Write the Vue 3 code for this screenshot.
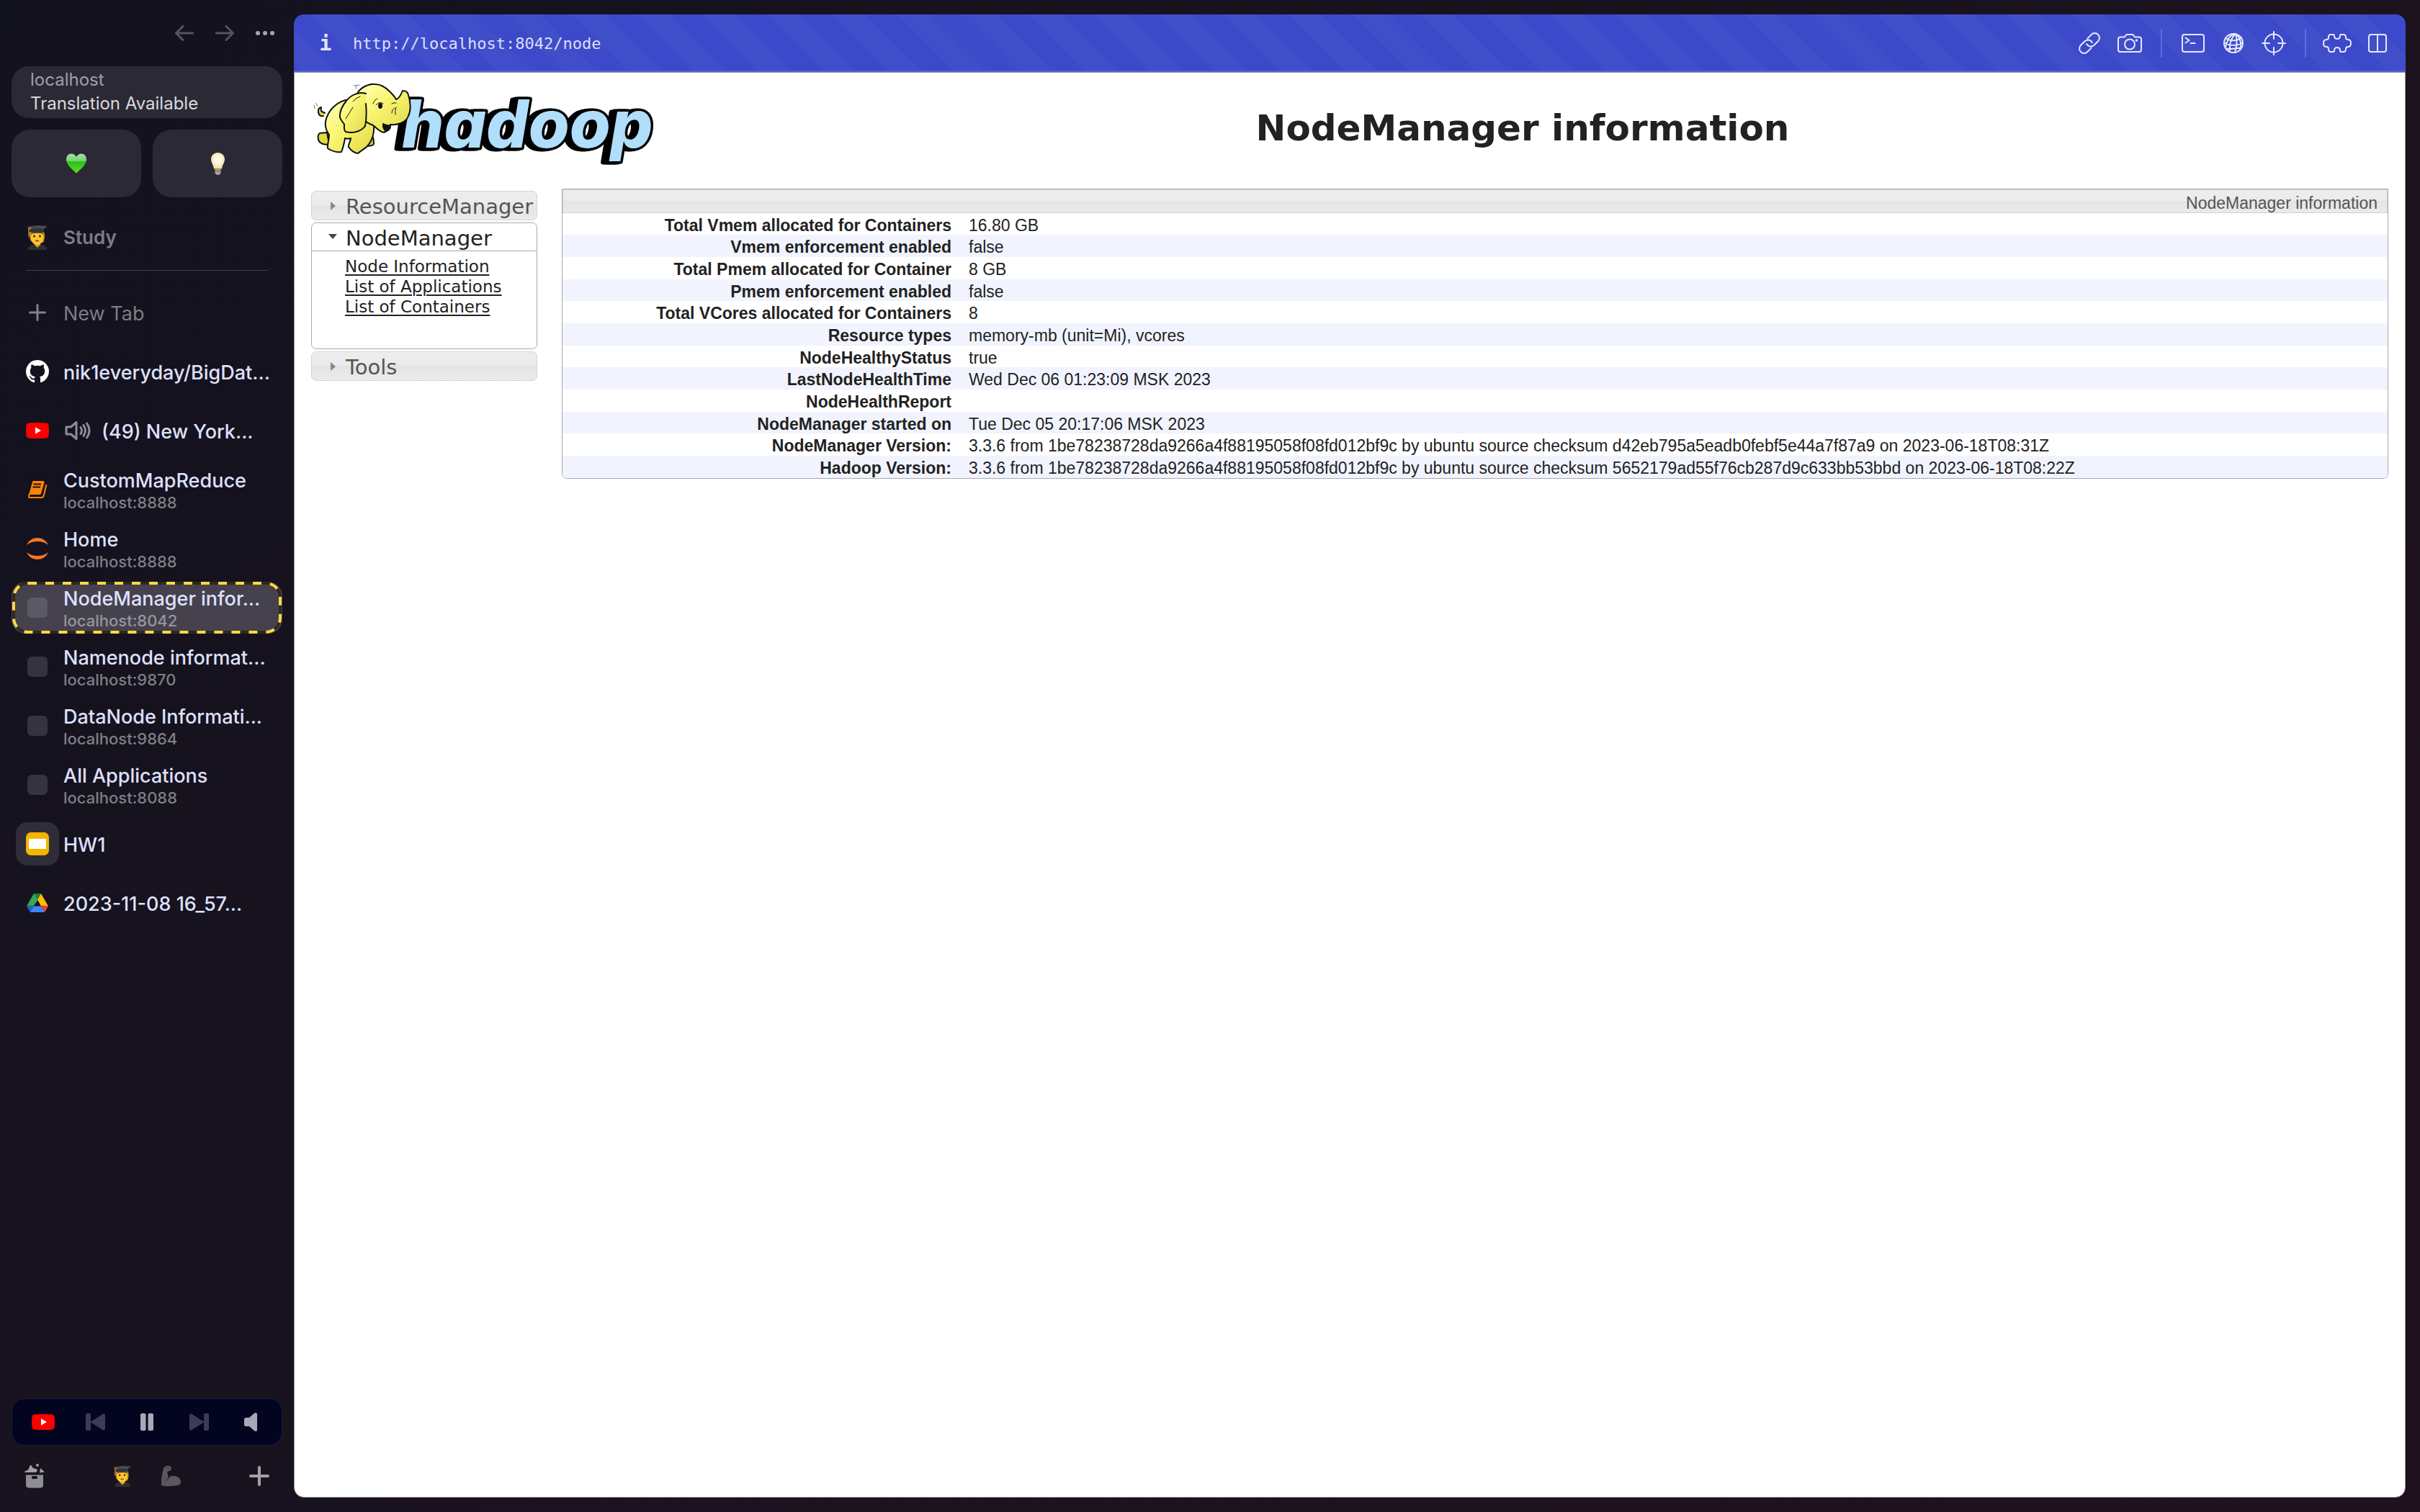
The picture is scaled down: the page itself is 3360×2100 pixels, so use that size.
<script setup>
const tabs = [
  { icon: 'github', title: 'nik1everyday/BigDat...' },
  { icon: 'youtube', title: '(49) New York...', sound: true },
  { icon: 'book', title: 'CustomMapReduce', host: 'localhost:8888' },
  { icon: 'jupyter', title: 'Home', host: 'localhost:8888' },
  { icon: 'blank', title: 'NodeManager infor...', host: 'localhost:8042', active: true },
  { icon: 'blank', title: 'Namenode informat...', host: 'localhost:9870' },
  { icon: 'blank', title: 'DataNode Informati...', host: 'localhost:9864' },
  { icon: 'blank', title: 'All Applications', host: 'localhost:8088' },
  { icon: 'slides', title: 'HW1', tile: true },
  { icon: 'drive', title: '2023-11-08 16_57...' },
]

const links = ['Node Information', 'List of Applications', 'List of Containers']

const rows = [
  ['Total Vmem allocated for Containers', '16.80 GB'],
  ['Vmem enforcement enabled', 'false'],
  ['Total Pmem allocated for Container', '8 GB'],
  ['Pmem enforcement enabled', 'false'],
  ['Total VCores allocated for Containers', '8'],
  ['Resource types', 'memory-mb (unit=Mi), vcores'],
  ['NodeHealthyStatus', 'true'],
  ['LastNodeHealthTime', 'Wed Dec 06 01:23:09 MSK 2023'],
  ['NodeHealthReport', ''],
  ['NodeManager started on', 'Tue Dec 05 20:17:06 MSK 2023'],
  ['NodeManager Version:', '3.3.6 from 1be78238728da9266a4f88195058f08fd012bf9c by ubuntu source checksum d42eb795a5eadb0febf5e44a7f87a9 on 2023-06-18T08:31Z'],
  ['Hadoop Version:', '3.3.6 from 1be78238728da9266a4f88195058f08fd012bf9c by ubuntu source checksum 5652179ad55f76cb287d9c633bb53bbd on 2023-06-18T08:22Z'],
]
</script>

<template>
  <div class="browser">
    <svg class="defs" aria-hidden="true">
      <defs>
        <linearGradient id="heartFill" x1="0" y1="0" x2="0" y2="1">
          <stop offset="0" stop-color="#a5e0a0" />
          <stop offset=".36" stop-color="#7ccf78" />
          <stop offset=".42" stop-color="#25c11c" />
          <stop offset="1" stop-color="#62e01c" />
        </linearGradient>
        <radialGradient id="bulbFill" cx=".5" cy=".45" r=".6">
          <stop offset=".3" stop-color="#fffdf4" />
          <stop offset="1" stop-color="#f3d587" />
        </radialGradient>
        <linearGradient id="elephantFill" x1="0" y1="0" x2="1" y2="1">
          <stop offset="0" stop-color="#ffffc0" />
          <stop offset=".4" stop-color="#fbf778" />
          <stop offset="1" stop-color="#dfd943" />
        </linearGradient>
        <symbol id="student" viewBox="0 0 28 34">
          <path d="M1 34c0-5 4-8 13-8s13 3 13 8z" fill="#2d2e33" />
          <path d="M10 24h8v3l-4 4-4-4z" fill="#dfa022" />
          <path d="M3 9h20c2 5 1 11-1 15h-3L6 23C3 20 2 14 3 9z" fill="#c98a1c" />
          <path d="M5 9h17v8c0 6-4 10-8.500 10S5 23 5 17z" fill="#fcc42f" />
          <path d="M5 8c5 3 14 3 18 0l-1 5c-5-3-12-3-17 0z" fill="#9c6817" />
          <path d="M4 4h19v5c-5 2-14 2-19 0z" fill="#34353b" />
          <path d="M0 2l14-2 14 1-5 4c-6-1-13-1-19 0z" fill="#4a4b51" />
          <path d="M1 2l5 1-3 4v8l-2 1z" fill="#9b6a33" />
          <circle cx="9.500" cy="15" r="1.500" fill="#3b2508" />
          <circle cx="17.500" cy="15" r="1.500" fill="#3b2508" />
          <path d="M11 22q2.500-1.500 5 0" fill="none" stroke="#7d3d10" stroke-width="1.500" />
        </symbol>
        <symbol id="yt" viewBox="0 0 32 22">
          <path d="M4 .6Q16-.6 28 .6q3 .4 3.500 3.400.9 7 0 14-.5 3-3.500 3.400-12 1.200-24 0-3-.4-3.500-3.400-.9-7 0-14Q1 1 4 .6z" fill="#f00" />
          <path d="M13 6.300v9.400l8-4.700z" fill="#fff" />
        </symbol>
      </defs>
    </svg>

    <aside class="sidebar">
      <nav class="history" aria-label="History">
        <button class="dim" aria-label="Back">
          <svg width="26" height="22" viewBox="0 0 26 22"><path d="M25 11H1.500M11 1.500L1.500 11l9.500 9.500" /></svg>
        </button>
        <button class="dim" aria-label="Forward">
          <svg width="26" height="22" viewBox="0 0 26 22"><path d="M1 11h23.500M15 1.500l9.500 9.500-9.500 9.500" /></svg>
        </button>
        <button aria-label="More">
          <svg width="26" height="6" viewBox="0 0 26 6" class="solid"><circle cx="3" cy="3" r="3" /><circle cx="13" cy="3" r="3" /><circle cx="23" cy="3" r="3" /></svg>
        </button>
      </nav>

      <button class="site">
        <span class="site-host">localhost</span>
        <span class="site-note">Translation Available</span>
      </button>

      <div class="favorites">
        <button aria-label="Green heart">
          <svg width="28" height="28" viewBox="0 0 28 28"><path d="M14 27.500C8 22 0 16 0 8.500 0 3.500 3 .5 7 .5c3.200 0 5.500 1.600 7 4.500C15.500 2.100 17.800.5 21 .5c4 0 7 3 7 8 0 7.500-8 13.500-14 19z" fill="url(#heartFill)" /></svg>
        </button>
        <button aria-label="Light bulb">
          <svg width="19" height="31" viewBox="0 0 19 31"><path d="M9.500 0C15 0 19 4 19 9.200c0 4.500-3 6.800-4 13.300H4C3 16 0 13.700 0 9.200 0 4 4 0 9.500 0z" fill="url(#bulbFill)" /><path d="M5.500 23h8v5.500L11 31H8l-2.500-2.500z" fill="#aaa39b" /><path d="M5.500 25.500h8" stroke="#77716b" stroke-width="1.200" /></svg>
        </button>
      </div>

      <h2 class="row space">
        <span class="icon"><svg width="28" height="34"><use href="#student" /></svg></span>
        Study
      </h2>
      <hr class="divider" />

      <div class="tabs">
        <button class="row new-tab">
          <span class="icon"><svg width="24" height="24" viewBox="0 0 24 24"><path d="M12 1.500v21M1.500 12h21" stroke="#828288" stroke-width="3" stroke-linecap="round" /></svg></span>
          <span class="label">New Tab</span>
        </button>
        <button v-for="tab in tabs" :key="tab.title" class="row tab" :class="{ active: tab.active }">
          <svg v-if="tab.active" class="focus-ring" aria-hidden="true">
            <rect class="ring-base" /><rect class="ring-dash" />
          </svg>
          <span class="icon" :class="{ tile: tab.tile }">
            <svg v-if="tab.icon === 'github'" width="32" height="32" viewBox="0 0 16 16"><path fill="#fff" d="M8 0C3.580 0 0 3.580 0 8c0 3.540 2.290 6.530 5.470 7.590.4.070.55-.17.55-.38 0-.19-.01-.82-.01-1.490-2.010.37-2.530-.49-2.690-.94-.09-.23-.48-.94-.82-1.130-.28-.15-.68-.52-.01-.53.63-.01 1.080.58 1.230.82.72 1.210 1.870.87 2.330.66.070-.52.28-.87.51-1.070-1.780-.2-3.640-.89-3.640-3.950 0-.87.31-1.590.82-2.150-.08-.2-.36-1.020.08-2.120 0 0 .67-.21 2.200.82.64-.18 1.320-.27 2-.27s1.360.09 2 .27c1.530-1.040 2.200-.82 2.200-.82.44 1.100.16 1.920.08 2.120.51.56.82 1.270.82 2.150 0 3.070-1.870 3.750-3.650 3.950.29.25.54.73.54 1.480 0 1.070-.01 1.930-.01 2.200 0 .21.15.46.55.38A8.010 8.010 0 0 0 16 8c0-4.420-3.580-8-8-8z" /></svg>
            <svg v-else-if="tab.icon === 'youtube'" width="32" height="22"><use href="#yt" /></svg>
            <svg v-else-if="tab.icon === 'book'" width="28" height="26" viewBox="0 0 28 26">
              <path d="M7.500 1H22q2 .5 1.500 2.500L19 18.500q-.5 1.500-2 1.500H2z" fill="#ff8400" />
              <path d="M8.500 5.500H19M7.500 9.500h10.500" stroke="#14131f" stroke-width="2" />
              <path d="M3.500 19Q1 21 2.500 24H20q2 0 2.500-2L26.500 6" fill="none" stroke="#ff8400" stroke-width="2" />
            </svg>
            <svg v-else-if="tab.icon === 'jupyter'" width="32" height="32" viewBox="0 0 32 32" fill="#f37726"><path d="M1 11C4 4 10 1 16 1s12 3 15 10C27 7.500 22 6 16 6S5 7.500 1 11z" /><path d="M1 21c3 7 9 10 15 10s12-3 15-10c-4 3.500-9 5-15 5S5 24.500 1 21z" /></svg>
            <svg v-else-if="tab.icon === 'slides'" width="32" height="32" viewBox="0 0 32 32"><rect width="32" height="32" rx="7" fill="#f5b400" /><path d="M4 9h24v14H4z" fill="#fff" /></svg>
            <svg v-else-if="tab.icon === 'drive'" width="30" height="26" viewBox="0 0 30 26">
              <path d="M10 0h5v10L9.500 17.500H0z" fill="#34a853" /><path d="M10 0h10l-5 8.500z" fill="#188038" /><path d="M20 0l10 17.500H20L15 8.500z" fill="#fbbc04" />
              <path d="M0 17.500h10L5 26z" fill="#1967d2" /><path d="M10 17.500h10L25 26H5z" fill="#4285f4" /><path d="M20 17.500h10L25 26z" fill="#ea4335" />
            </svg>
            <i v-else class="blank"></i>
          </span>
          <svg v-if="tab.sound" class="sound" width="36" height="26" viewBox="0 0 36 26"><path d="M2 8h6.500L16 1.500v23L8.500 18H2zM22 8.500q3 4.500 0 9M26 5.500q5 7.500 0 15M30.500 3q7 10 0 20" /></svg>
          <span class="label">
            <span class="tab-title">{{ tab.title }}</span>
            <small v-if="tab.host" class="tab-host">{{ tab.host }}</small>
          </span>
        </button>
      </div>

      <div class="player">
        <button aria-label="Open video"><svg width="32" height="22"><use href="#yt" /></svg></button>
        <button aria-label="Previous"><svg width="27" height="24" viewBox="0 0 27 24" fill="#3c3b55"><rect width="7" height="24" rx="2" /><path d="M7 11.500L24 .8q3-1 3 2v18.400q0 3-3 2L7 12.500z" /></svg></button>
        <button aria-label="Pause"><svg width="18" height="24" viewBox="0 0 18 24" fill="#a9a8b8"><rect width="7.500" height="24" rx="2" /><rect x="10.500" width="7.500" height="24" rx="2" /></svg></button>
        <button aria-label="Next"><svg width="27" height="24" viewBox="0 0 27 24" fill="#3c3b55"><rect x="20" width="7" height="24" rx="2" /><path d="M20 11.500L3 .8q-3-1-3 2v18.400q0 3 3 2l17-10.700z" /></svg></button>
        <button aria-label="Mute"><svg width="18" height="26" viewBox="0 0 18 26" fill="#a9a8b8"><path d="M2.500 7H7L14.500.6Q18-.8 18 2v22q0 2.800-3.500 1.400L7 19H2.500Q0 19 0 16.500v-7Q0 7 2.500 7z" /></svg></button>
      </div>

      <footer class="spaces">
        <button aria-label="Library">
          <svg width="28" height="34" viewBox="0 0 28 34"><path d="M2 15.500h24v13.500q0 4.500-4.500 4.500h-15Q2 33.500 2 29z" fill="#8f8d94" /><rect x="10" y="17" width="8" height="4" rx="1.500" fill="#19141f" /><g fill="#a09ea4"><path d="M0 11l5.500-3 2-5.500q1-1 2 0L12 6l5 1.500q1.500 1 .5 2.500L16 12H1q-1 0-1-1z" /><circle cx="18" cy="2" r="2" /><path d="M22 6l6 5.500-7 1z" /></g></svg>
        </button>
        <div class="space-list">
          <button aria-label="Study"><svg width="24" height="29"><use href="#student" /></svg></button>
          <button aria-label="Fitness">
            <svg width="28" height="30" viewBox="0 0 28 30"><path d="M1 28L1 24C1 17 2 11 4 5 5 2 8 0 12 1q3 1 3 3.500T12 8l-3 1c1 4 2 7 1 10 2-4 6-5 10-4 5 1 8 4 8 8 0 3-2 5-5 5-8 1-17 2-22 0z" fill="#5a575f" /><path d="M6 21q4 0 5-3M8 4q3-1 5 1" fill="none" stroke="#3f3c45" stroke-width="1.500" /></svg>
          </button>
        </div>
        <button aria-label="New"><svg width="28" height="28" viewBox="0 0 28 28"><path d="M14 2v24M2 14h24" stroke="#a3a1a6" stroke-width="4" stroke-linecap="round" /></svg></button>
      </footer>
    </aside>

    <main class="window">
      <header class="toolbar">
        <button class="info" aria-label="Site information">i</button>
        <a class="address" href="http://localhost:8042/node">http://localhost:8042/node</a>
        <div class="tools">
          <button aria-label="Copy link"><svg width="30" height="30" viewBox="0 0 30 30"><g transform="rotate(-45 15 15)"><path d="M12.500 21.500H4.500a6.500 6.500 0 0 1 0-13h8a6.500 6.500 0 0 1 6 8.500" /><path d="M17.500 8.500h8a6.500 6.500 0 0 1 0 13h-8a6.500 6.500 0 0 1-6-8.500" /></g></svg></button>
          <button aria-label="Capture"><svg width="34" height="26" viewBox="0 0 34 26"><path d="M4 4.500h6L12.500 1h9L24 4.500h6q3 0 3 3V22q0 3-3 3H4q-3 0-3-3V7.500q0-3 3-3z" /><circle cx="17" cy="14.500" r="7" /><circle cx="26.500" cy="9" r=".8" /></svg></button>
          <span class="separator"></span>
          <button aria-label="Console"><svg width="32" height="26" viewBox="0 0 32 26"><rect x="1" y="1" width="30" height="24" rx="3" /><path d="M5.500 5.500l5 3.500-5 3.500M12.500 13h6" /></svg></button>
          <button aria-label="Network"><svg width="28" height="28" viewBox="0 0 28 28"><circle cx="14" cy="14" r="13" /><path d="M17 1C11 6 8 15 9 26M17 1c2 7 2 17-1 26M17 1c6 4 8 12 7 21M17 1C10 2 5 7 3 21M3 7c7 5 17 4 22-1M1 13c8 5 19 5 26 0M4 22c6 0 14 0 21-2" /></svg></button>
          <button aria-label="Inspect"><svg width="34" height="34" viewBox="0 0 34 34"><circle cx="17" cy="17" r="12.500" /><path d="M17 1v10M17 23v10M1 17h10M23 17h10" /></svg></button>
          <span class="separator"></span>
          <button aria-label="Extensions"><svg width="40" height="28" viewBox="0 0 40 28"><path d="M11 2h4q1 0 1 2 0 4 4 4t4-4q0-2 1-2h4q3 0 3 4 0 3 3 3 4 0 4 5t-4 5q-3 0-3 3 0 4-3 4h-4q-1 0-1-2 0-4-4-4t-4 4q0 2-1 2h-4q-3 0-3-4 0-3-3-3-4 0-4-5t4-5q3 0 3-3 0-4 3-4z" /></svg></button>
          <button aria-label="Split view"><svg width="26" height="26" viewBox="0 0 26 26"><rect x="1" y="1" width="24" height="24" rx="3" /><path d="M13 1v24" /></svg></button>
        </div>
      </header>

      <div class="page">
        <div class="page-header">
          <svg class="logo" width="480" height="130" viewBox="0 0 480 130" role="img" aria-label="hadoop">
            <text class="wordmark" x="126" y="92">hadoop</text>
            <path d="M5 38l-1-5M9 34l-3-4M62 10l1-4M59 6l8-1" fill="none" stroke="#777" stroke-linecap="round" />
            <g stroke="#111" stroke-width="2" stroke-linejoin="round" stroke-linecap="round">
              <path d="M17 48q-6 1-7-5-1-6 4-7-1 5 1 6t4 2" fill="#dfd943" />
              <path d="M12 72c-4 3-3 11 2 14 4 2 8 2 11 1l-3-16z" fill="#dfd943" />
              <path d="M82 73c4 2 5 6 5 13 0 4-10 5-13 2z" fill="#d5cf3c" />
              <path d="M53 25C36 27 23 40 20 56c-1 8 1 13 5 18 0 8-3 14-2 19 5 4 14 6 19 5 2-5 4-13 5-19 3 1 5 1 8 0 0 4-4 9-3 12 3 5 9 9 13 9 4-4 9-6 12-9 8-8 11-20 10-30z" fill="url(#elephantFill)" />
              <path d="M65 15C70 8 80 3 89 4c9 0 15 5 20 10 4 4 7 7 9 11 4-1 7-7 9-12 4 0 7 1 8 6 3 9 4 21 0 29-3 9-15 13-25 12 0 6-4 9-9 11-6-1-10-6-15-10-14-5-23-15-25-27z" fill="url(#elephantFill)" />
              <path d="M100 59q-1 7 4 10 6-1 6-8-5 1-10-2z" fill="#111" />
              <path d="M76 17C66 14 55 19 49 27c-5 6-10 14-9 23 1 4 4 6 6 10 0 4-1 8 2 10 11 3 22-1 27-8 2-9 2-19 1-31" fill="url(#elephantFill)" />
              <path d="M58 28q5-6 10-7M48 52l10-16M86 31q2-6 6-7" fill="none" stroke-width="1" />
              <path d="M112 31q3-2 6-1M112 44q0-5 4-7M117 46q-1-6 1-10M90 33q5-6 10-2" fill="none" stroke-width="1" />
              <ellipse cx="96" cy="34" rx="2" ry="3" fill="#111" />
            </g>
          </svg>
          <h1>NodeManager information</h1>
        </div>

        <div class="columns">
          <nav class="menu" aria-label="Cluster">
            <button class="menu-head"><svg width="14" height="12" viewBox="0 0 14 12"><path d="M4 0l7 6-7 6z" fill="#888" /></svg><span>ResourceManager</span></button>
            <section class="menu-group">
              <button class="menu-head open"><svg width="14" height="12" viewBox="0 0 14 12"><path d="M1 2h12L7 9z" fill="#454545" /></svg><span>NodeManager</span></button>
              <ul>
                <li v-for="link in links" :key="link"><a href="#">{{ link }}</a></li>
              </ul>
            </section>
            <button class="menu-head"><svg width="14" height="12" viewBox="0 0 14 12"><path d="M4 0l7 6-7 6z" fill="#888" /></svg><span>Tools</span></button>
          </nav>

          <div class="info-box">
            <table>
              <colgroup>
                <col class="name-col" />
                <col />
              </colgroup>
              <thead>
                <tr><th colspan="2">NodeManager information</th></tr>
              </thead>
              <tbody>
                <tr v-for="row in rows" :key="row[0]">
                  <th scope="row">{{ row[0] }}</th>
                  <td>{{ row[1] }}</td>
                </tr>
              </tbody>
            </table>
          </div>
        </div>
      </div>
    </main>
  </div>
</template>

<style>
html,
body {
  margin: 0;
  background: #15131f;
}
</style>

<style scoped>
.browser {
  display: flex;
  min-height: 100vh;
  box-sizing: border-box;
  background: linear-gradient(135deg, #12121e, #1a131f 50%, #20111e);
  font-family: Inter, sans-serif;
}

.browser * {
  box-sizing: border-box;
}

.defs {
  position: absolute;
  width: 0;
  height: 0;
}

button {
  display: flex;
  align-items: center;
  justify-content: center;
  margin: 0;
  padding: 0;
  border: 0;
  background: none;
  color: inherit;
  font: inherit;
}

svg {
  display: block;
  flex: none;
}

.sidebar {
  display: flex;
  flex-direction: column;
  flex: none;
  width: 408px;
  padding: 0 16px;
}

.history {
  display: flex;
  justify-content: flex-end;
  gap: 16px;
  padding-right: 4px;
}

.history button {
  width: 40px;
  height: 92px;
}

.history svg {
  fill: none;
  stroke: #a5a5aa;
  stroke-width: 3;
  stroke-linecap: round;
  stroke-linejoin: round;
}

.history .dim svg {
  stroke: #55545d;
}

.history .solid {
  fill: #a5a5aa;
  stroke: none;
}

.site {
  flex-direction: column;
  align-items: flex-start;
  height: 72px;
  padding: 0 0 2px 26px;
  border-radius: 24px;
  background: #2b2935;
  font-size: 24px;
  line-height: 33px;
}

.site-host {
  color: #a09fa5;
}

.site-note {
  color: #dadadc;
}

.favorites {
  display: flex;
  gap: 16px;
  margin-top: 16px;
}

.favorites button {
  flex: 1;
  height: 94px;
  border-radius: 26px;
  background: #2b2935;
}

.row {
  display: flex;
  align-items: center;
  justify-content: flex-start;
  gap: 20px;
  width: 100%;
  height: 72px;
  padding-left: 20px;
  font-size: 27px;
  line-height: 32px;
  text-align: left;
  white-space: nowrap;
}

.icon {
  display: flex;
  align-items: center;
  justify-content: center;
  width: 32px;
  height: 32px;
}

.icon.tile {
  width: 60px;
  height: 60px;
  margin: 0 -14px;
  border-radius: 16px;
  background: #2f2d39;
}

.space {
  margin: 20px 0 0;
  color: #7d7d84;
  font-size: 26px;
  font-weight: 600;
}

.divider {
  width: 336px;
  height: 1px;
  margin: 9px 20px 22px;
  border: 0;
  background: #3f3d48;
}

.tabs {
  display: flex;
  flex-direction: column;
  gap: 10px;
}

.new-tab {
  color: #7d7d84;
}

.tab {
  position: relative;
  border-radius: 20px;
  color: #dfe0fc;
}

.tab.active {
  background: #45424e;
}

.focus-ring {
  position: absolute;
  inset: 0;
  width: 100%;
  height: 100%;
  overflow: visible;
}

.focus-ring rect {
  x: 3px;
  y: 2px;
  width: calc(100% - 6px);
  height: calc(100% - 4px);
  rx: 20px;
  fill: none;
  stroke-width: 4;
}

.ring-base {
  stroke: #30291a;
}

.ring-dash {
  stroke: #ffd945;
  stroke-dasharray: 12 12;
}

.sound {
  margin-left: 2px;
  margin-right: -5px;
  fill: none;
  stroke: #8d8c93;
  stroke-width: 3;
  stroke-linejoin: round;
  stroke-linecap: round;
}

.label {
  display: flex;
  flex-direction: column;
  padding-top: 3px;
}

.tab-title {
  font-weight: 500;
}

.tab-host {
  color: #7f7f86;
  font-size: 22px;
  font-weight: 500;
  line-height: 28px;
}

.active .tab-host {
  color: #97959d;
}

.blank {
  width: 28px;
  height: 28px;
  border-radius: 6px;
  background: #35333f;
}

.active .blank {
  background: #5b5963;
}

.player {
  display: flex;
  align-items: center;
  justify-content: space-between;
  height: 66px;
  margin-top: auto;
  padding: 0 8px;
  border: 1px solid #1b1b3c;
  border-radius: 18px;
  background: #030420;
}

.player button {
  width: 70px;
  height: 64px;
}

.spaces {
  display: flex;
  align-items: center;
  justify-content: space-between;
  height: 92px;
  padding: 0 18px 8px;
}

.space-list {
  display: flex;
  align-items: center;
  gap: 41px;
}

.window {
  display: flex;
  flex-direction: column;
  flex: 1;
  min-width: 0;
  margin: 20px 20px 20px 0;
  border-radius: 14px;
  overflow: hidden;
}

.toolbar {
  display: flex;
  align-items: center;
  height: 80px;
  padding: 2px 11px 0 28px;
  border-bottom: 2px solid #5560cd;
  background: repeating-linear-gradient(45deg, #3c49ca 0, #3c49ca 8px, #404eca 8px, #404eca 40px, #3c49ca 40px, #3c49ca 64px);
  color: #e4e6fb;
  font-family: "DejaVu Sans Mono", monospace;
}

.info {
  width: 32px;
  font-size: 28px;
  font-weight: 700;
}

.address {
  margin-left: 22px;
  color: #dcdff9;
  font-size: 22px;
  text-decoration: none;
}

.tools {
  display: flex;
  align-items: center;
  margin-left: auto;
}

.tools button {
  width: 56px;
  height: 60px;
}

.tools svg {
  fill: none;
  stroke: #e6e8fc;
  stroke-width: 2;
  stroke-linecap: round;
  stroke-linejoin: round;
}

.separator {
  width: 2px;
  height: 40px;
  margin: 0 15px;
  background: #5d6be6;
}

.page {
  flex: 1;
  padding: 12px 23px;
  border: 1px solid #98979c;
  border-radius: 0 0 14px 14px;
  background: #fff;
  color: #222;
}

.page-header {
  display: flex;
  align-items: center;
}

.wordmark {
  fill: #b0defb;
  stroke: #000;
  stroke-width: 7;
  stroke-linejoin: round;
  paint-order: stroke;
  font-family: Inter, sans-serif;
  font-size: 92px;
  font-style: italic;
  font-weight: 800;
  filter: drop-shadow(-4px 0 #000) drop-shadow(-4px 1px #000);
}

h1 {
  flex: 1;
  margin: 0;
  font-family: "DejaVu Sans", sans-serif;
  font-size: 50px;
  font-weight: 700;
  line-height: 60px;
  text-align: center;
}

.columns {
  display: flex;
  align-items: flex-start;
  gap: 34px;
  margin-top: 19px;
}

.menu {
  display: flex;
  flex-direction: column;
  flex: none;
  gap: 3px;
  width: 314px;
  padding-top: 3px;
  font-family: "DejaVu Sans", sans-serif;
}

.menu-head {
  justify-content: flex-start;
  gap: 11px;
  width: 100%;
  height: 41px;
  padding-left: 22px;
  border: 1px solid #d3d3d3;
  border-radius: 7px;
  background: linear-gradient(#ededed, #ebebeb 50%, #e4e4e4 50%, #ebebeb);
  color: #555;
  font-size: 29px;
  line-height: 36px;
  white-space: nowrap;
}

.menu-head span {
  padding-top: 3px;
}

.menu-group {
  height: 176px;
  border: 1px solid #aaa;
  border-radius: 7px;
}

.menu-head.open {
  height: 39px;
  border: 0;
  border-bottom: 1px solid #aaa;
  border-radius: 0;
  background: none;
  color: #222;
}

.menu ul {
  margin: 0;
  padding: 7px 0 0 46px;
  list-style: none;
  font-size: 23px;
  line-height: 28px;
}

.menu a {
  color: #222;
  text-decoration: underline 2px;
  text-underline-offset: 3px;
}

.info-box {
  flex: 1;
  min-width: 0;
  overflow: hidden;
  border: 1px solid #aaa;
  border-radius: 0 0 7px 7px;
}

table {
  width: 100%;
  border-spacing: 0;
  table-layout: fixed;
  font-family: "Liberation Sans", sans-serif;
  font-size: 23px;
  line-height: 26px;
}

.name-col {
  width: 552px;
}

thead th {
  height: 33px;
  padding: 5px 13px 0 0;
  border: 1px solid #d0d0d0;
  background: linear-gradient(#ededed, #ebebeb 50%, #e4e4e4 50%, #ebebeb);
  color: #555;
  font-weight: 400;
  text-align: right;
}

tbody tr {
  height: 31px;
}

tbody tr:nth-child(3n + 1) {
  height: 30px;
}

tbody tr:nth-child(even) {
  background: #f1f4fe;
}

tbody th,
tbody td {
  padding: 4px 12px 0;
  text-align: right;
  vertical-align: top;
}

tbody td {
  text-align: left;
  white-space: nowrap;
}
</style>
